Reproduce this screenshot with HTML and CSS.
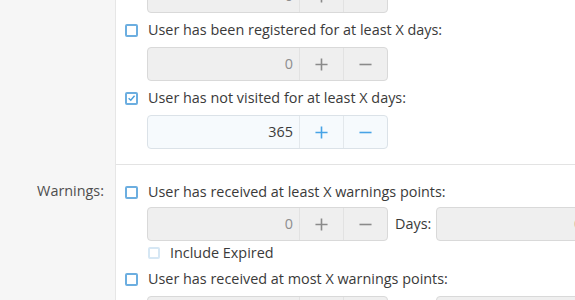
FILE: index.html
```html
<!DOCTYPE html>
<html>
<head>
<meta charset="utf-8">
<link rel="stylesheet" href="styles.css">
</head>
<body>
<div class="form">
  <div class="row">
    <div class="row-label"></div>
    <div class="row-input first">
      <div class="spin disabled top">
        <div class="spin-val">0</div>
        <div class="spin-btn"><svg viewBox="0 0 14 14"><path d="M7 0.5V13.5M0.5 7H13.5"/></svg></div>
        <div class="spin-btn"><svg viewBox="0 0 14 14"><path d="M0.5 7H13.5"/></svg></div>
      </div>
      <label class="check"><span class="box"></span><span>User has been registered for at least X days:</span></label>
      <div class="spin disabled">
        <div class="spin-val">0</div>
        <div class="spin-btn"><svg viewBox="0 0 14 14"><path d="M7 0.5V13.5M0.5 7H13.5"/></svg></div>
        <div class="spin-btn"><svg viewBox="0 0 14 14"><path d="M0.5 7H13.5"/></svg></div>
      </div>
      <label class="check"><span class="box checked"><svg viewBox="0 0 10 10"><path d="M1.8 5.2L4.2 7.4L8.4 2.6"/></svg></span><span>User has not visited for at least X days:</span></label>
      <div class="spin active">
        <div class="spin-val">365</div>
        <div class="spin-btn"><svg viewBox="0 0 14 14"><path d="M7 0.5V13.5M0.5 7H13.5"/></svg></div>
        <div class="spin-btn"><svg viewBox="0 0 14 14"><path d="M0.5 7H13.5"/></svg></div>
      </div>
    </div>
  </div>
  <div class="row">
    <div class="row-label"><span class="label-text">Warnings:</span></div>
    <div class="row-input second">
      <label class="check"><span class="box"></span><span>User has received at least X warnings points:</span></label>
      <div class="spin-line">
        <div class="spin disabled">
          <div class="spin-val">0</div>
          <div class="spin-btn"><svg viewBox="0 0 14 14"><path d="M7 0.5V13.5M0.5 7H13.5"/></svg></div>
          <div class="spin-btn"><svg viewBox="0 0 14 14"><path d="M0.5 7H13.5"/></svg></div>
        </div>
        <span class="days">Days:</span>
        <div class="spin disabled">
          <div class="spin-val">0</div>
          <div class="spin-btn"><svg viewBox="0 0 14 14"><path d="M7 0.5V13.5M0.5 7H13.5"/></svg></div>
          <div class="spin-btn"><svg viewBox="0 0 14 14"><path d="M0.5 7H13.5"/></svg></div>
        </div>
      </div>
      <label class="check sub"><span class="box faded"></span><span>Include Expired</span></label>
      <label class="check"><span class="box"></span><span>User has received at most X warnings points:</span></label>
      <div class="spin-line">
        <div class="spin disabled">
          <div class="spin-val">0</div>
          <div class="spin-btn"><svg viewBox="0 0 14 14"><path d="M7 0.5V13.5M0.5 7H13.5"/></svg></div>
          <div class="spin-btn"><svg viewBox="0 0 14 14"><path d="M0.5 7H13.5"/></svg></div>
        </div>
        <span class="days">Days:</span>
        <div class="spin disabled">
          <div class="spin-val">0</div>
          <div class="spin-btn"><svg viewBox="0 0 14 14"><path d="M7 0.5V13.5M0.5 7H13.5"/></svg></div>
          <div class="spin-btn"><svg viewBox="0 0 14 14"><path d="M0.5 7H13.5"/></svg></div>
        </div>
      </div>
    </div>
  </div>
</div>
</body>
</html>
```
FILE: styles.css
```css
html, body {
  margin: 0;
  overflow: hidden;
  background: #fff;
}
body {
  font-family: "Open Sans", "Noto Sans", sans-serif;
  font-size: 14.4px;
  line-height: 20px;
  color: #3a3a3a;
}
.form {
  display: flex;
  flex-direction: column;
  height: 300px;
}
.row {
  display: flex;
}
.row:last-child {
  flex: 1;
}
.row-label {
  width: 116px;
  flex: none;
  box-sizing: border-box;
  background: #f6f6f6;
  border-right: 1px solid #e6e6e6;
  text-align: right;
  padding-right: 11px;
}
.label-text {
  display: block;
  padding-top: 17px;
  color: #4e4e4e;
}
.row-input {
  flex: 1;
  min-width: 0;
  padding-left: 9px;
  display: flex;
  flex-direction: column;
  align-items: flex-start;
}
.row-input.first {
  padding-bottom: 15px;
}
.row-input.second {
  border-top: 1px solid #e3e3e3;
  padding-top: 17px;
}
.check {
  display: flex;
  align-items: center;
  gap: 10px;
  height: 20px;
  white-space: nowrap;
}
.box {
  width: 13px;
  height: 13px;
  box-sizing: border-box;
  border: 2px solid #6caee0;
  border-radius: 2px;
  background: #fff;
  flex: none;
  display: flex;
  align-items: center;
  justify-content: center;
}
.box svg {
  width: 10px;
  height: 10px;
  fill: none;
  stroke: #4a9fdc;
  stroke-width: 1.6;
}
.box.faded {
  border-color: #d6e7f4;
  width: 12px;
  height: 12px;
}
.spin {
  display: flex;
  width: 241px;
  height: 34px;
  box-sizing: border-box;
  border: 1px solid #d9d9d9;
  border-radius: 4px;
  background: #efefef;
  flex: none;
}
.spin.active {
  background: #f6fafd;
  border-color: #dbe2e8;
}
.spin-val {
  width: 151px;
  box-sizing: border-box;
  padding-right: 6px;
  text-align: right;
  line-height: 32px;
  color: #8e8e8e;
}
.spin.active .spin-val {
  color: #3a3a3a;
}
.spin-btn {
  width: 44px;
  box-sizing: border-box;
  border-left: 1px solid #e2e2e2;
  display: flex;
  align-items: center;
  justify-content: center;
}
.spin-btn svg {
  width: 13px;
  height: 13px;
  fill: none;
  stroke: #8a8a8a;
  stroke-width: 1.7;
}
.spin.active .spin-btn svg {
  stroke: #47a3e6;
}
.spin.active .spin-btn {
  border-left-color: #e3e8ec;
}
.row-input > .spin,
.spin-line {
  margin-left: 22px;
}
.spin.top {
  margin-top: -21px;
}
.first > .check {
  margin-top: 7px;
}
.first > .spin:not(.top) {
  margin-top: 7px;
}
.spin-line {
  display: flex;
  align-items: center;
  flex-wrap: nowrap;
  margin-top: 5px;
}
.days {
  margin-left: 7px;
  margin-right: 5px;
  white-space: nowrap;
}
.check.sub {
  margin-left: 23px;
  margin-top: 2px;
}
.check.sub + .check {
  margin-top: 6px;
}
.check.sub + .check + .spin-line {
  margin-top: 7px;
}
```
